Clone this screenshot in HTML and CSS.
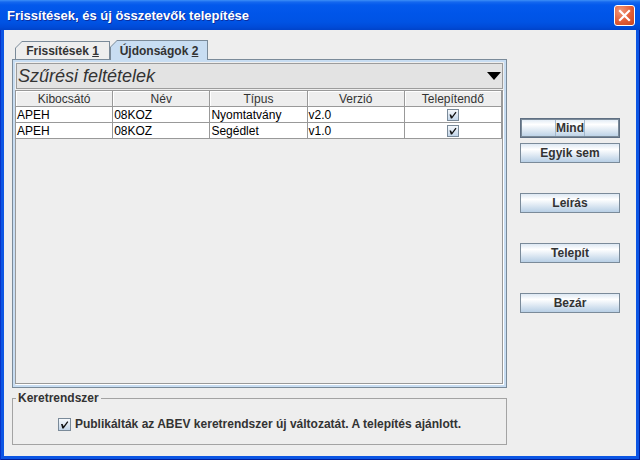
FILE: index.html
```html
<!DOCTYPE html>
<html lang="hu">
<head>
<meta charset="utf-8">
<title>Frissítések, és új összetevők telepítése</title>
<link rel="stylesheet" href="styles.css">
</head>
<body>
<div class="window">
  <div class="titlebar">
    <span class="title">Frissítések, és új összetevők telepítése</span>
    <div class="close">
      <svg width="19" height="19" viewBox="0 0 19 19"><path d="M5 5 L14 14 M14 5 L5 14" stroke="#fff" stroke-width="2.2" stroke-linecap="square"/></svg>
    </div>
  </div>
  <div class="frame">
    <div class="client">
      <div class="main">
        <div class="tabs">
          <div class="tab tab-1"><div class="tab-in">Frissítések&nbsp;<u>1</u></div></div>
          <div class="tab tab-2 selected"><div class="tab-in">Újdonságok&nbsp;<u>2</u></div></div>
        </div>
        <div class="panel">
          <div class="panel-in">
            <div class="filter"><span class="filter-text">Szűrési feltételek</span><span class="arrow"></span></div>
            <div class="scroll">
              <table class="grid">
                <thead>
                  <tr><th>Kibocsátó</th><th>Név</th><th>Típus</th><th>Verzió</th><th>Telepítendő</th></tr>
                </thead>
                <tbody>
                  <tr><td>APEH</td><td>08KOZ</td><td>Nyomtatvány</td><td>v2.0</td><td class="c"><span class="cb small"><svg width="10" height="10" viewBox="0 0 10 10"><path d="M1.5 4.5 L3 4.5 L4 6.5 L7.5 1.8 L8.5 2.5 L4 8.5 L2.8 8.5 Z" fill="#111"/></svg></span></td></tr>
                  <tr><td>APEH</td><td>08KOZ</td><td>Segédlet</td><td>v1.0</td><td class="c"><span class="cb small"><svg width="10" height="10" viewBox="0 0 10 10"><path d="M1.5 4.5 L3 4.5 L4 6.5 L7.5 1.8 L8.5 2.5 L4 8.5 L2.8 8.5 Z" fill="#111"/></svg></span></td></tr>
                </tbody>
              </table>
            </div>
          </div>
        </div>
        <fieldset class="group">
          <legend>Keretrendszer</legend>
          <div class="chk-row">
            <span class="cb"><svg width="11" height="11" viewBox="0 0 11 11"><path d="M2 5 L3.6 5 L4.6 7.2 L8.3 2.2 L9.3 3 L4.6 9.5 L3.3 9.5 Z" fill="#111"/></svg></span>
            <span>Publikálták az ABEV keretrendszer új változatát. A telepítés ajánlott.</span>
          </div>
        </fieldset>
      </div>
      <div class="buttons">
        <button class="btn default"><span class="focus">Mind</span></button>
        <button class="btn gap-s">Egyik sem</button>
        <button class="btn gap-l">Leírás</button>
        <button class="btn gap-l">Telepít</button>
        <button class="btn gap-l">Bezár</button>
      </div>
    </div>
  </div>
</div>
</body>
</html>
```
FILE: styles.css
```css
* { box-sizing: border-box; }
html, body { margin: 0; padding: 0; }
body {
  width: 640px;
  height: 460px;
  overflow: hidden;
  background: #eeeeee;
  font-family: "Liberation Sans", Arial, sans-serif;
  font-size: 12px;
  color: #333333;
}
.window {
  width: 640px;
  height: 460px;
  display: flex;
  flex-direction: column;
  background: #0a4bdb;
}
.titlebar {
  height: 30px;
  flex: none;
  display: flex;
  align-items: center;
  padding: 0 5px 0 7px;
  background: linear-gradient(to bottom, #3d8ff7 0, #1568ef 2px, #0359ec 5px, #0055e9 14px, #0053e4 22px, #004bd8 27px, #0043c9 30px);
}
.title {
  flex: 1;
  color: #ffffff;
  font-weight: bold;
  font-size: 13px;
  text-shadow: 1px 1px 0 #0c2d9e;
  white-space: nowrap;
}
.close {
  width: 21px;
  height: 21px;
  border: 1px solid #ffffff;
  border-radius: 3px;
  background: radial-gradient(circle at 30% 25%, #f0987a 0, #e35d36 55%, #c9441e 100%);
  display: flex;
  align-items: center;
  justify-content: center;
}
.frame {
  flex: 1;
  display: flex;
  padding: 0 4px 4px 4px;
  background: #0c55e4;
  box-shadow: inset 1px 0 0 #0733c9, inset -1px 0 0 #00209e, inset 0 -1px 0 #001f9a;
}
.client {
  flex: 1;
  background: #eeeeee;
  display: flex;
  align-items: flex-start;
}
.main {
  width: 495px;
  margin: 10px 0 0 8px;
  display: flex;
  flex-direction: column;
}
.tabs {
  height: 20px;
  display: flex;
  align-items: flex-end;
  padding-left: 3px;
  margin-bottom: -1px;
  position: relative;
  z-index: 1;
}
.tab {
  background: #7a8a99;
  padding: 1px 1px 0 1px;
  clip-path: polygon(0 7px, 7px 0, 100% 0, 100% 100%, 0 100%);
}
.tab-in {
  height: 100%;
  display: flex;
  align-items: center;
  justify-content: center;
  font-weight: bold;
  font-size: 12px;
  color: #333333;
  background: #eeeeee;
  clip-path: polygon(0 6px, 6px 0, 100% 0, 100% 100%, 0 100%);
  white-space: nowrap;
}
.tab-1 { width: 95px; height: 18px; margin-bottom: 1px; }
.tab-2 { width: 98px; height: 20px; }
.tab-2 .tab-in { background: #c8ddf2; padding-top: 1px; }
.panel {
  height: 329px;
  border: 1px solid #7a8a99;
  padding: 2px;
  background: #c8ddf2;
  display: flex;
  flex-direction: column;
}
.panel-in {
  flex: 1;
  background: #eeeeee;
  display: flex;
  flex-direction: column;
}
.filter {
  height: 26px;
  flex: none;
  margin: 1px 1px 0 1px;
  border: 1px solid #9c9c9c;
  background: #e3e3e3;
  display: flex;
  align-items: center;
  padding: 0 1px 0 1px;
}
.filter-text {
  font-size: 18px;
  font-style: italic;
  color: #333333;
}
.arrow {
  margin-left: auto;
  width: 0;
  height: 0;
  border-left: 7px solid transparent;
  border-right: 7px solid transparent;
  border-top: 8px solid #000000;
}
.scroll {
  flex: 1;
  margin: 1px 1px 1px 0;
  border: 1px solid #999999;
  box-shadow: 1px 1px 0 #ffffff;
  background: #eeeeee;
}
.grid {
  width: 100%;
  table-layout: fixed;
  border-collapse: separate;
  border-spacing: 0;
  font-size: 12px;
}
.grid th {
  height: 16px;
  padding: 0;
  font-weight: normal;
  color: #333333;
  background: #eeeeee;
  border-right: 1px solid #999999;
  border-bottom: 1px solid #999999;
  box-shadow: inset 1px 1px 0 #ffffff;
  text-align: center;
  line-height: 14px;
}
.grid td {
  height: 16px;
  padding: 0 1px;
  color: #000000;
  background: #ffffff;
  border-right: 1px solid #999999;
  border-bottom: 1px solid #999999;
  white-space: nowrap;
  overflow: hidden;
  line-height: 14px;
}
.grid td.c { text-align: center; padding: 0; }
.cb {
  display: inline-flex;
  align-items: center;
  justify-content: center;
  width: 13px;
  height: 13px;
  border: 1px solid #7a8a99;
  background: linear-gradient(#f6f9fc, #c2d5e9);
  vertical-align: middle;
}
.cb.small { width: 12px; height: 12px; }
.group {
  margin: 3px 0 0 0;
  padding: 0;
  border: 1px solid #a3a3a3;
  min-width: 0;
}
.group legend {
  margin-left: 3px;
  padding: 0 2px;
  font-weight: bold;
  font-size: 12px;
  line-height: 14px;
  color: #333333;
}
.chk-row {
  display: flex;
  justify-content: center;
  align-items: center;
  gap: 4px;
  padding: 12px 0 13px 0;
  height: 39px;
  font-weight: bold;
  color: #333333;
  white-space: nowrap;
}
.buttons {
  width: 100px;
  margin: 88px 0 0 13px;
  display: flex;
  flex-direction: column;
}
.btn {
  height: 20px;
  margin: 0;
  padding: 0;
  border: 1px solid #7a8a99;
  background: linear-gradient(#dde8f3 0, #ffffff 30%, #b8cfe5 100%);
  font-family: "Liberation Sans", Arial, sans-serif;
  font-weight: bold;
  font-size: 12px;
  color: #333333;
  display: flex;
  align-items: center;
  justify-content: center;
}
.btn.default {
  border-color: #5f6f82;
  box-shadow: inset 0 0 0 1px #7a8a99;
}
.focus {
  height: 16px;
  display: flex;
  align-items: center;
  padding: 0;
  border-left: 1px solid #a3b8cc;
  border-right: 1px solid #a3b8cc;
}
.gap-s { margin-top: 5px; }
.gap-l { margin-top: 30px; }
```
